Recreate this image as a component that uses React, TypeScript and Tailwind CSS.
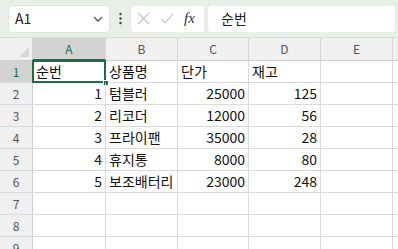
import React from "react";

const cols = ["A", "B", "C", "D", "E"];
const colW = [73, 72, 71, 72, 72];
type Cell = { v: string; r?: boolean };
const data: Cell[][] = [
  [{ v: "순번" }, { v: "상품명" }, { v: "단가" }, { v: "재고" }, { v: "" }],
  [{ v: "1", r: true }, { v: "텀블러" }, { v: "25000", r: true }, { v: "125", r: true }, { v: "" }],
  [{ v: "2", r: true }, { v: "리코더" }, { v: "12000", r: true }, { v: "56", r: true }, { v: "" }],
  [{ v: "3", r: true }, { v: "프라이팬" }, { v: "35000", r: true }, { v: "28", r: true }, { v: "" }],
  [{ v: "4", r: true }, { v: "휴지통" }, { v: "8000", r: true }, { v: "80", r: true }, { v: "" }],
  [{ v: "5", r: true }, { v: "보조배터리" }, { v: "23000", r: true }, { v: "248", r: true }, { v: "" }],
  [{ v: "" }, { v: "" }, { v: "" }, { v: "" }, { v: "" }],
  [{ v: "" }, { v: "" }, { v: "" }, { v: "" }, { v: "" }],
  [{ v: "" }, { v: "" }, { v: "" }, { v: "" }, { v: "" }],
];

const font = { fontFamily: '"Noto Sans CJK KR", "Noto Sans", sans-serif' };

export default function App() {
  return (
    <div className="w-[398px] h-[249px] overflow-hidden bg-white relative" style={font}>
      {/* toolbar */}
      <div className="h-[38px] bg-[#e9eee9] border-b border-[#d7dcd7] flex items-center pl-[9px] pr-[3px]">
        <div className="w-[100px] h-[26px] bg-white rounded-[4px] flex items-center justify-between pl-[6px] pr-[6px] shadow-[0_0_0_1px_#e0e4e0]">
          <span className="text-[14px] text-[#222]">A1</span>
          <svg width="10" height="6" viewBox="0 0 10 6"><path d="M1 1l4 4 4-4" fill="none" stroke="#555" strokeWidth="1.3" /></svg>
        </div>
        <div className="w-[22px] flex justify-center">
          <svg width="3" height="13" viewBox="0 0 3 13"><circle cx="1.5" cy="2" r="1.2" fill="#444" /><circle cx="1.5" cy="6.5" r="1.2" fill="#444" /><circle cx="1.5" cy="11" r="1.2" fill="#444" /></svg>
        </div>
        <div className="w-[73px] h-[26px] bg-white rounded-l-[4px] flex items-center pl-[6px] gap-[10px]">
          <svg width="13" height="13" viewBox="0 0 13 13"><path d="M1 1l11 11M12 1L1 12" stroke="#c8c8c8" strokeWidth="1.2" /></svg>
          <svg width="14" height="12" viewBox="0 0 14 12"><path d="M1 6l4 4 8-9" fill="none" stroke="#c8c8c8" strokeWidth="1.2" /></svg>
          <span className="text-[15px] italic text-[#333] leading-none" style={{ fontFamily: '"Liberation Serif", serif' }}>fx</span>
        </div>
        <div className="flex-1 ml-[4px] h-[26px] bg-white rounded-[4px] flex items-center pl-[13px] text-[14px] text-[#222]">순번</div>
      </div>
      {/* grid */}
      <div className="flex flex-col">
        <div className="flex h-[23px] bg-[#f0f0f0] border-b border-[#cfcfcf]">
          <div className="w-[33px] border-r border-[#cfcfcf] relative">
            <svg className="absolute right-[3px] bottom-[3px]" width="10" height="10" viewBox="0 0 10 10"><path d="M10 0V10H0Z" fill="#d8d8d8" /></svg>
          </div>
          {cols.map((c, i) => (
            <div
              key={c}
              className={
                "flex items-center justify-center text-[12px] border-r border-[#d8d8d8] " +
                (i === 0 ? "bg-[#d3d3d3] text-[#1e6b44] border-b-2 border-b-[#1e6b44] -mb-[1px]" : "text-[#555]")
              }
              style={{ width: colW[i] }}
            >
              {c}
            </div>
          ))}
        </div>
        {data.map((row, ri) => (
          <div key={ri} className="flex h-[22px] border-b border-[#dadada]">
            <div
              className={
                "w-[33px] flex items-center justify-center text-[12px] border-r border-[#cfcfcf] " +
                (ri === 0 ? "bg-[#d3d3d3] text-[#1e6b44]" : "bg-[#f0f0f0] text-[#555]")
              }
            >
              {ri + 1}
            </div>
            {row.map((cell, ci) => (
              <div
                key={ci}
                className={
                  "relative flex items-center text-[14px] text-[#111] px-[3px] border-r border-[#dadada] whitespace-nowrap " +
                  (cell.r ? "justify-end" : "justify-start")
                }
                style={{ width: colW[ci] }}
              >
                {cell.v}
                {ri === 0 && ci === 0 && (
                  <>
                    <div className="absolute -left-[1px] -top-[1px] -right-[1px] -bottom-[1px] border-2 border-[#1e6b44]" />
                    <div className="absolute -right-[4px] -bottom-[4px] w-[6px] h-[6px] bg-[#1e6b44] border border-white" />
                  </>
                )}
              </div>
            ))}
          </div>
        ))}
      </div>
    </div>
  );
}
